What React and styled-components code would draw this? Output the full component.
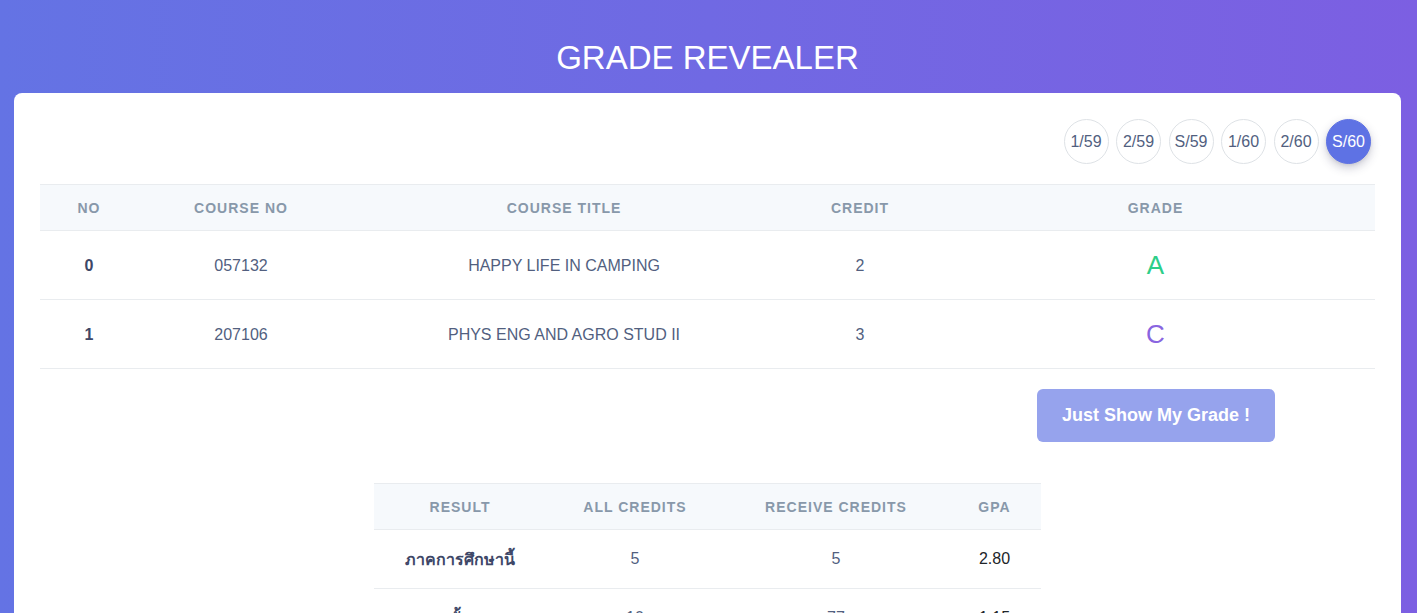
import React from "react"
import styled, { createGlobalStyle } from "styled-components"

const GlobalStyle = createGlobalStyle`
  html, body {
    margin: 0;
    height: 100%;
    overflow: hidden;
  }
  body {
    font-family: "Liberation Sans", Arial, "Noto Sans", sans-serif;
    background: linear-gradient(to right, #6473e4, #7c5fe2);
    color: #525f7f;
  }
`

const semesters = ["1/59", "2/59", "S/59", "1/60", "2/60", "S/60"]

const courses = [
  { no: 0, code: "057132", title: "HAPPY LIFE IN CAMPING", credit: 2, grade: "A" },
  { no: 1, code: "207106", title: "PHYS ENG AND AGRO STUD II", credit: 3, grade: "C" },
]

const results = [
  { label: "ภาคการศึกษานี้", all: 5, receive: 5, gpa: "2.80" },
  { label: "รวมทั้งหมด", all: 10, receive: 77, gpa: "1.15" },
]

const gradeColors = {
  A: "#2dce89",
  B: "#11cdef",
  C: "#8965e0",
  D: "#fb6340",
  F: "#f5365c",
}

export default function App() {
  return (
    <>
      <GlobalStyle />
      <Page>
        <Title>GRADE REVEALER</Title>
        <Card>
          <SemesterBar>
            {semesters.map((s) => (
              <SemesterButton key={s} $active={s === "S/60"}>
                {s}
              </SemesterButton>
            ))}
          </SemesterBar>

          <Table>
            <colgroup>
              <col style={{ width: 98 }} />
              <col style={{ width: 206 }} />
              <col style={{ width: 440 }} />
              <col style={{ width: 152 }} />
              <col />
            </colgroup>
            <thead>
              <tr>
                <Th>No</Th>
                <Th>Course No</Th>
                <Th>Course Title</Th>
                <Th>Credit</Th>
                <Th>Grade</Th>
              </tr>
            </thead>
            <tbody>
              {courses.map((c) => (
                <tr key={c.no}>
                  <Td $bold>{c.no}</Td>
                  <Td>{c.code}</Td>
                  <Td>{c.title}</Td>
                  <Td>{c.credit}</Td>
                  <GradeCell $color={gradeColors[c.grade]}>{c.grade}</GradeCell>
                </tr>
              ))}
            </tbody>
          </Table>

          <ActionRow>
            <ShowButton disabled>Just Show My Grade !</ShowButton>
          </ActionRow>

          <ResultTable>
            <colgroup>
              <col style={{ width: 172 }} />
              <col style={{ width: 178 }} />
              <col style={{ width: 224 }} />
              <col />
            </colgroup>
            <thead>
              <tr>
                <Th>Result</Th>
                <Th>All Credits</Th>
                <Th>Receive Credits</Th>
                <Th>GPA</Th>
              </tr>
            </thead>
            <tbody>
              {results.map((r) => (
                <tr key={r.label}>
                  <ResultTd $bold>{r.label}</ResultTd>
                  <ResultTd>{r.all}</ResultTd>
                  <ResultTd>{r.receive}</ResultTd>
                  <ResultTd $dark>{r.gpa}</ResultTd>
                </tr>
              ))}
            </tbody>
          </ResultTable>
        </Card>
      </Page>
    </>
  )
}

const Page = styled.div`
  padding: 40px 16px 0 14px;
`

const Title = styled.h1`
  margin: 0 0 17px;
  text-align: center;
  color: #fff;
  font-size: 33px;
  line-height: 36px;
  font-weight: 400;
`

const Card = styled.div`
  background: #fff;
  border-radius: 8px;
  padding: 26px 26px 40px;
  min-height: 600px;
`

const SemesterBar = styled.div`
  display: flex;
  justify-content: flex-end;
  gap: 7.5px;
  padding-right: 4px;
  margin-bottom: 20px;
`

const SemesterButton = styled.button`
  width: 45px;
  height: 45px;
  border-radius: 50%;
  padding: 0;
  font-family: inherit;
  font-size: 16px;
  cursor: pointer;
  border: 1px solid ${(p) => (p.$active ? "#5e72e4" : "#dee2e6")};
  background: ${(p) => (p.$active ? "#5e72e4" : "#fff")};
  color: ${(p) => (p.$active ? "#fff" : "#525f7f")};
  box-shadow: ${(p) =>
    p.$active ? "0 4px 10px rgba(50, 50, 93, 0.25), 0 1px 3px rgba(0, 0, 0, 0.08)" : "none"};
`

const Table = styled.table`
  width: 100%;
  border-collapse: collapse;
  table-layout: fixed;
`

const Th = styled.th`
  height: 45px;
  padding: 0;
  background: #f6f9fc;
  color: #8898aa;
  font-size: 14px;
  font-weight: 700;
  letter-spacing: 1px;
  text-transform: uppercase;
  text-align: center;
  border-top: 1px solid #e9ecef;
  border-bottom: 1px solid #e9ecef;
`

const Td = styled.td`
  height: 67px;
  padding: 1px 0 0;
  text-align: center;
  font-size: 16px;
  font-weight: ${(p) => (p.$bold ? 700 : 400)};
  color: ${(p) => (p.$bold ? "#3e4767" : "#525f7f")};
  border-bottom: 1px solid #e9ecef;
`

const GradeCell = styled(Td)`
  font-size: 26px;
  color: ${(p) => p.$color};
`

const ActionRow = styled.div`
  display: flex;
  justify-content: flex-end;
  padding-right: 100px;
  margin-top: 20px;
`

const ShowButton = styled.button`
  width: 238px;
  height: 53px;
  border: none;
  border-radius: 6px;
  background: #96a3ed;
  color: #fff;
  font-family: inherit;
  font-size: 18px;
  font-weight: 700;
`

const ResultTable = styled.table`
  width: 667px;
  margin: 41px auto 0;
  border-collapse: collapse;
  table-layout: fixed;
`

const ResultTd = styled.td`
  height: 58px;
  padding: 0;
  text-align: center;
  font-size: 16px;
  font-weight: ${(p) => (p.$bold ? 700 : 400)};
  color: ${(p) => (p.$dark ? "#212529" : p.$bold ? "#3e4767" : "#525f7f")};
  border-bottom: 1px solid #e9ecef;
`
